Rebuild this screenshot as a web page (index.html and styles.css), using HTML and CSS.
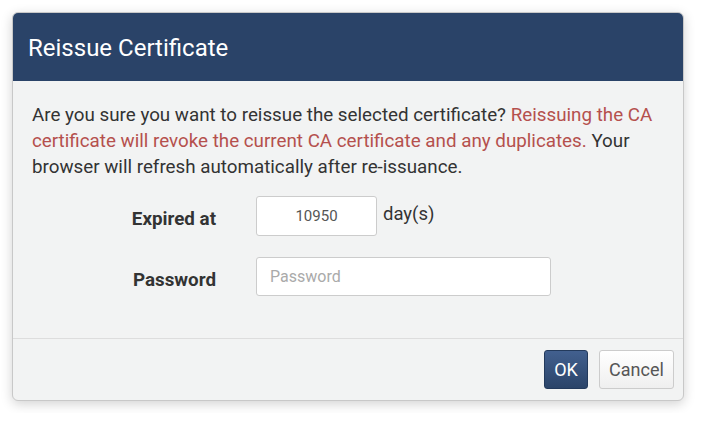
FILE: index.html
```html
<!DOCTYPE html>
<html>
<head>
<meta charset="utf-8">
<link rel="stylesheet" href="styles.css">
</head>
<body>
<div class="modal">
  <div class="modal-header">
    <h3 class="modal-title">Reissue Certificate</h3>
  </div>
  <div class="modal-body">
    <p class="message">Are you sure you want to reissue the selected certificate? <span class="warn">Reissuing the CA certificate will revoke the current CA certificate and any duplicates.</span> Your browser will refresh automatically after re-issuance.</p>
    <div class="form">
      <label class="label">Expired at</label>
      <div class="field">
        <input class="input input-days" type="text" value="10950">
        <span class="unit">day(s)</span>
      </div>
      <label class="label">Password</label>
      <div class="field">
        <input class="input input-pass" type="password" placeholder="Password">
      </div>
    </div>
  </div>
  <div class="modal-footer">
    <button class="btn btn-primary">OK</button>
    <button class="btn btn-default">Cancel</button>
  </div>
</div>
</body>
</html>
```

FILE: styles.css
```css
html, body {
  margin: 0;
  padding: 0;
  background: #ffffff;
}
body {
  padding: 12px;
  font-family: Roboto, "Liberation Sans", sans-serif;
  color: #333333;
}
.modal {
  width: 672px;
  height: 389px;
  box-sizing: border-box;
  border: 1px solid #c8c8c8;
  border-radius: 6px;
  background: #f2f3f3;
  box-shadow: 0 3px 12px rgba(0, 0, 0, 0.18);
  display: flex;
  flex-direction: column;
  overflow: hidden;
}
.modal-header {
  background: #2a4368;
  height: 69px;
  margin: -1px -1px 0 -1px;
  display: flex;
  align-items: center;
  padding: 0 16px;
  flex-shrink: 0;
}
.modal-title {
  margin: 0;
  color: #ffffff;
  font-size: 24px;
  font-weight: 400;
  padding-top: 2px;
}
.modal-body {
  flex: 1;
  padding: 21px 19px 0 19px;
}
.message {
  margin: 0;
  font-size: 18.8px;
  line-height: 26px;
}
.warn {
  color: #b5504d;
}
.form {
  margin-top: 16px;
  display: grid;
  grid-template-columns: 184px 1fr;
  column-gap: 40px;
  row-gap: 21px;
  align-items: center;
}
.label {
  text-align: right;
  font-weight: 700;
  font-size: 18.8px;
  padding-top: 6px;
}
.field {
  display: flex;
  align-items: center;
  gap: 6px;
}
.input {
  height: 40px;
  box-sizing: border-box;
  border: 1px solid #cccccc;
  border-radius: 3px;
  background: #ffffff;
  font-family: Roboto, "Liberation Sans", sans-serif;
  font-size: 15px;
  color: #555555;
  padding: 0 13px;
  outline: none;
}
.input-days {
  width: 121px;
  text-align: center;
}
.input-pass {
  width: 295px;
  height: 39px;
  font-size: 16px;
}
.input-pass::placeholder {
  color: #aaaaaa;
}
.unit {
  font-size: 18.5px;
  margin-top: -4px;
}
.modal-footer {
  border-top: 1px solid #dddddd;
  height: 62px;
  box-sizing: border-box;
  display: flex;
  justify-content: flex-end;
  align-items: flex-start;
  gap: 11px;
  padding: 11px 9px 0 0;
}
.btn {
  height: 39px;
  border-radius: 3px;
  font-family: Roboto, "Liberation Sans", sans-serif;
  font-size: 18px;
  padding: 0 10px;
  cursor: pointer;
}
.btn-primary {
  width: 44px;
  padding: 0;
  color: #ffffff;
  border: 1px solid #233a5c;
  background: linear-gradient(#42608f, #2b4469);
}
.btn-default {
  width: 75px;
  padding: 0;
  color: #555555;
  border: 1px solid #cccccc;
  background: linear-gradient(#ffffff, #efefef);
}
```
